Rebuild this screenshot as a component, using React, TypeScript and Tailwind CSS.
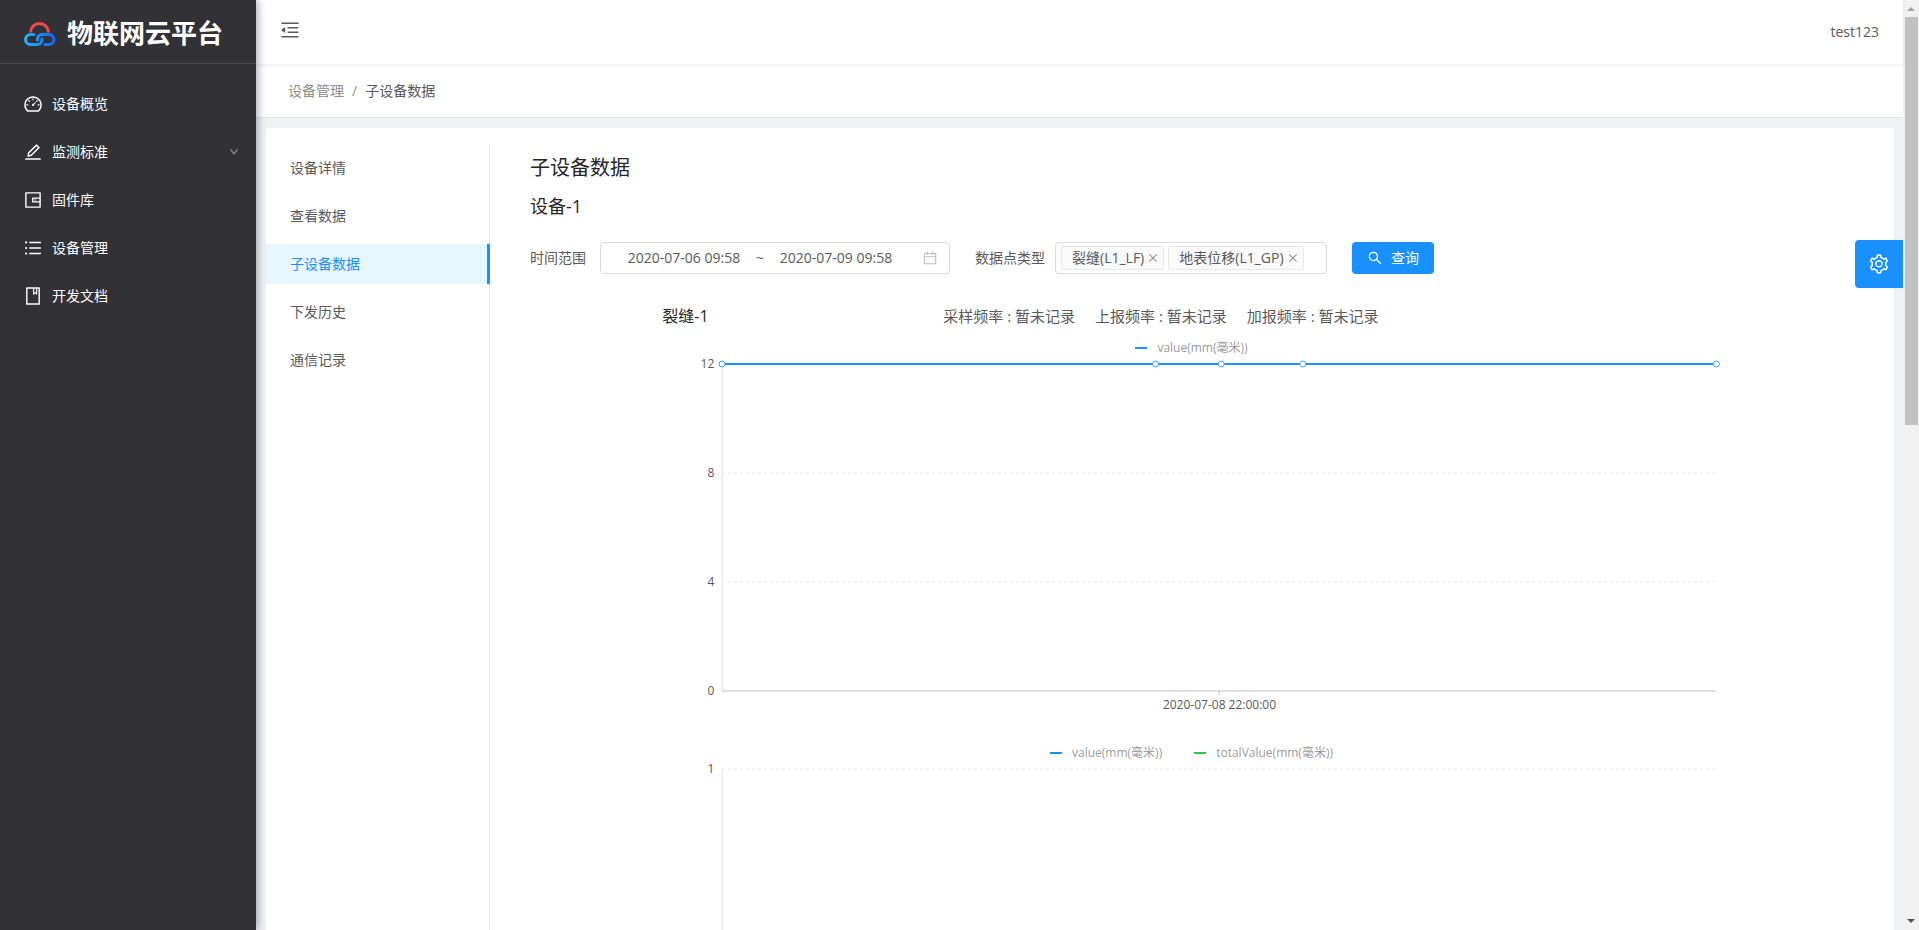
import React, { useState } from 'react'
import {
  AiOutlineBook,
  AiOutlineCalendar,
  AiOutlineClose,
  AiOutlineDashboard,
  AiOutlineDown,
  AiOutlineEdit,
  AiOutlineMenuFold,
  AiOutlineSearch,
  AiOutlineSetting,
  AiOutlineUnorderedList,
  AiOutlineWallet,
} from 'react-icons/ai'

const MENU = [
  { label: '设备概览', Icon: AiOutlineDashboard },
  { label: '监测标准', Icon: AiOutlineEdit, nested: true },
  { label: '固件库', Icon: AiOutlineWallet },
  { label: '设备管理', Icon: AiOutlineUnorderedList },
  { label: '开发文档', Icon: AiOutlineBook },
]

const TABS = ['设备详情', '查看数据', '子设备数据', '下发历史', '通信记录']

const Logo = (): React.JSX.Element => (
  <svg className="w-8 h-6" viewBox="0 0 32 24" fill="none" strokeLinecap="round" strokeWidth="3">
    <defs>
      <linearGradient id="link" x1="0" y1="0" x2="32" y2="0" gradientUnits="userSpaceOnUse">
        <stop stopColor="#1fb6ff" />
        <stop offset="1" stopColor="#1463ff" />
      </linearGradient>
    </defs>
    <path d="M6.500 10.500a9 9 0 0 1 18 0" stroke="#f8474f" strokeLinecap="butt" />
    <path d="M10 12.500H6.500a5 5 0 0 0 0 10h7a4.500 4.500 0 0 0 4.500-4.500v-1" stroke="url(#link)" />
    <path d="M21 22.500H25a5 5 0 0 0 0-10h-7a4.500 4.500 0 0 0-4.500 4.500v1" stroke="url(#link)" />
  </svg>
)

const Sidebar = (): React.JSX.Element => (
  <aside className="w-64 shrink-0 bg-[#323136] text-white z-20 shadow-[2px_0_8px_rgba(0,21,41,0.35)]">
    <div className="h-16 pt-1 pl-6 flex flex-row items-center gap-[11px] border-b border-[#4a4a4e]">
      <Logo />
      <h1 className="text-[26px] font-bold whitespace-nowrap">物联网云平台</h1>
    </div>
    <nav className="pt-5 flex flex-col gap-2">
      {MENU.map(({ label, Icon, nested }) => (
        <a key={label} href="#" className="h-10 pl-[23px] pr-[17px] flex flex-row items-center gap-[9px] text-sm">
          <Icon className="w-5 h-5" />
          <span className="flex-grow">{label}</span>
          {nested ? <AiOutlineDown className="w-[10px] h-[10px] stroke-[60px] text-[#8f8f92]" /> : null}
        </a>
      ))}
    </nav>
  </aside>
)

type ChartProps = {
  legend: { name: string; color: string }[]
  ticks: string[]
  points?: number[]
  xLabel?: string
}

const Chart = ({ legend, ticks, points = [], xLabel }: ChartProps): React.JSX.Element => {
  const last = Math.max(ticks.length - 1, 1)

  return (
    <div className="flex flex-col">
      <div className="h-4 flex flex-row justify-center items-center gap-8 text-xs text-[#9b9b9b]">
        {legend.map(({ name, color }) => (
          <div key={name} className="flex flex-row items-center gap-[10px]">
            <div className="w-3 h-[2px]" style={{ background: color }} />
            <span>{name}</span>
          </div>
        ))}
      </div>
      <div className="mt-2 pr-1 flex flex-row">
        <div className="w-[60px] pr-2 -my-2 flex flex-col justify-between text-xs text-right text-[#595959]">
          {ticks.map((tick) => (
            <span key={tick}>{tick}</span>
          ))}
        </div>
        <svg className="h-[327px] flex-1 overflow-visible">
          {ticks.slice(0, last).map((tick, i) => (
            <line
              key={tick}
              x1="0"
              x2="100%"
              y1={`${(i / last) * 100}%`}
              y2={`${(i / last) * 100}%`}
              stroke="#e8e8e8"
              strokeDasharray="3 3"
            />
          ))}
          <line x1="0" x2="0" y1="0" y2="100%" stroke="#dedede" />
          <line x1="0" x2="100%" y1="100%" y2="100%" stroke="#bfbfbf" />
          {xLabel ? <line x1="50%" x2="50%" y1="100%" y2="331" stroke="#bfbfbf" /> : null}
          {points.length ? <line x1="0" x2="100%" y1="0" y2="0" stroke="#1890ff" strokeWidth="2" /> : null}
          {points.map((x) => (
            <circle key={x} cx={`${x}%`} cy="0" r="3" fill="#fff" stroke="#3fa2ff" />
          ))}
        </svg>
      </div>
      <div className="mt-[6px] pl-[60px] pr-1 text-xs text-center text-[#595959]">{xLabel}</div>
    </div>
  )
}

const Filters = (): React.JSX.Element => {
  const [tags, setTags] = useState(['裂缝(L1_LF)', '地表位移(L1_GP)'])

  return (
    <form
      className="mt-[22px] flex flex-row items-center text-sm text-[#595959]"
      onSubmit={(e) => e.preventDefault()}
    >
      <label htmlFor="start">时间范围</label>
      <div className="w-[350px] h-8 ml-[14px] pl-[22px] pr-[11px] flex flex-row items-center rounded border border-[#d9d9d9]">
        <input id="start" className="w-[122px] text-center outline-none" defaultValue="2020-07-06 09:58" />
        <span className="w-[30px] text-center">~</span>
        <input
          aria-label="结束时间"
          className="w-[122px] text-center outline-none"
          defaultValue="2020-07-09 09:58"
        />
        <AiOutlineCalendar className="w-4 h-4 ml-auto text-[#bfbfbf]" />
      </div>
      <span className="ml-[25px]">数据点类型</span>
      <div className="w-[272px] h-8 ml-[10px] px-[5px] flex flex-row items-center gap-1 rounded border border-[#d9d9d9]">
        {tags.map((tag) => (
          <div
            key={tag}
            className="h-6 pl-[10px] pr-1 flex flex-row items-center gap-[3px] rounded-xs border border-[#e8e8e8] bg-[#fafafa] whitespace-nowrap"
          >
            {tag}
            <button
              type="button"
              aria-label="移除"
              onClick={() => setTags((current) => current.filter((item) => item !== tag))}
            >
              <AiOutlineClose className="w-3 h-3 text-[#8c8c8c]" />
            </button>
          </div>
        ))}
      </div>
      <button className="w-[82px] h-8 ml-[25px] flex flex-row items-center justify-center gap-2 rounded bg-[#1890ff] text-white">
        <AiOutlineSearch className="w-4 h-4" />
        查询
      </button>
    </form>
  )
}

const Scrollbar = (): React.JSX.Element => (
  <div className="w-4 shrink-0 py-[7px] flex flex-col items-center bg-[#f1f1f1]">
    <svg className="w-2 h-1" viewBox="0 0 8 4" fill="#a3a3a3">
      <path d="M0 4 4 0l4 4z" />
    </svg>
    <div className="w-[13px] h-[408px] mt-[6px] bg-[#c1c1c1]" />
    <svg className="w-2 h-1 mt-auto" viewBox="0 0 8 4" fill="#505050">
      <path d="M0 0h8L4 4z" />
    </svg>
  </div>
)

const App = (): React.JSX.Element => {
  const [tab, setTab] = useState('子设备数据')

  return (
    <div className="h-screen flex flex-row overflow-hidden bg-[#f0f2f5] font-['Open_Sans','Noto_Sans_CJK_SC',sans-serif]">
      <Sidebar />
      <div className="flex-1 min-w-0 flex flex-col">
        <header className="h-16 shrink-0 pl-[23px] pr-6 flex flex-row items-center justify-between bg-white z-10 shadow-[0_1px_4px_rgba(0,21,41,0.08)]">
          <button aria-label="收起菜单">
            <AiOutlineMenuFold className="w-[22px] h-[22px] mb-1 text-[#595959]" />
          </button>
          <span className="text-sm text-[#595959]">test123</span>
        </header>
        <div className="h-[54px] shrink-0 pl-8 flex flex-row items-center gap-2 bg-white border-b border-[#e4e5e8] text-sm">
          <a href="#" className="text-[#8c8c8c]">
            设备管理
          </a>
          <span className="text-[#8c8c8c]">/</span>
          <span className="text-[#595959]">子设备数据</span>
        </div>
        <main className="flex-1 min-h-0 mt-[10px] mx-[10px] pt-4 flex flex-row rounded-t-xs bg-white overflow-hidden">
          <nav className="w-56 shrink-0 pt-1 flex flex-col gap-2 border-r border-[#e8e8e8] text-sm">
            {TABS.map((name) => (
              <button
                key={name}
                className={
                  name === tab
                    ? 'h-10 pl-6 -mr-px text-left border-r-3 border-[#1890ff] bg-[#e6f7ff] text-[#1890ff]'
                    : 'h-10 pl-6 text-left text-[#595959]'
                }
                onClick={() => setTab(name)}
              >
                {name}
              </button>
            ))}
          </nav>
          <section className="flex-1 min-w-0 pt-[10px] px-10 text-[#262626]">
            <h2 className="text-xl leading-7">子设备数据</h2>
            <h3 className="mt-[10px] text-lg leading-7">设备-1</h3>
            <Filters />
            <div className="w-4/5 mx-auto mt-[30px]">
              <div className="h-6 mb-3 flex flex-row items-center">
                <h4 className="w-[281px] text-base">裂缝-1</h4>
                <div className="flex flex-row gap-5 text-[15px] text-[#595959] whitespace-nowrap">
                  <span>采样频率 : 暂未记录</span>
                  <span>上报频率 : 暂未记录</span>
                  <span>加报频率 : 暂未记录</span>
                </div>
              </div>
              <Chart
                legend={[{ name: 'value(mm(毫米))', color: '#1890ff' }]}
                ticks={['12', '8', '4', '0']}
                points={[0, 43.6, 50.2, 58.4, 100]}
                xLabel="2020-07-08 22:00:00"
              />
              <div className="mt-8">
                <Chart
                  legend={[
                    { name: 'value(mm(毫米))', color: '#1890ff' },
                    { name: 'totalValue(mm(毫米))', color: '#2fc25b' },
                  ]}
                  ticks={['1']}
                />
              </div>
            </div>
          </section>
        </main>
      </div>
      <Scrollbar />
      <button
        aria-label="设置"
        className="fixed right-4 top-60 w-12 h-12 flex items-center justify-center rounded-l bg-[#1890ff] text-white z-30"
      >
        <AiOutlineSetting className="w-[22px] h-[22px]" />
      </button>
    </div>
  )
}

export default App
